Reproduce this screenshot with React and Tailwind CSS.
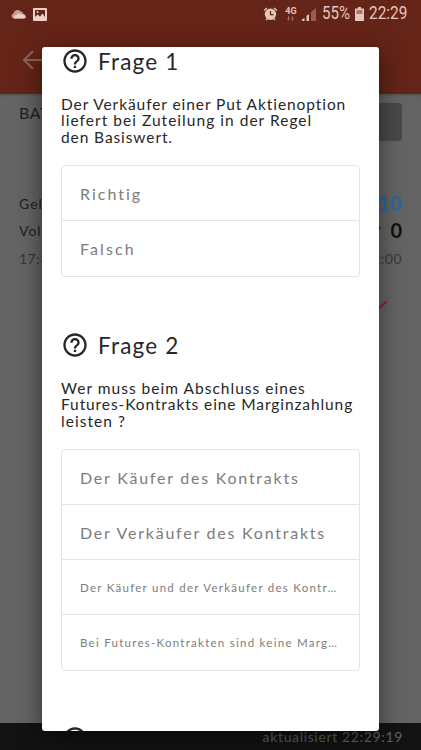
import React from 'react'

const questions = [
  {
    id: 1,
    title: 'Frage 1',
    lines: [
      { text: 'Der Verkäufer einer Put Aktienoption', tracking: 'tracking-[0.92px]' },
      { text: 'liefert bei Zuteilung in der Regel', tracking: 'tracking-[1.03px]' },
      { text: 'den Basiswert.', tracking: 'tracking-[0.9px]' },
    ],
    options: [
      { text: 'Richtig', style: 'text-base tracking-[2px]' },
      { text: 'Falsch', style: 'text-base tracking-[2.1px]' },
    ],
  },
  {
    id: 2,
    title: 'Frage 2',
    lines: [
      { text: 'Wer muss beim Abschluss eines', tracking: 'tracking-[1.02px]' },
      { text: 'Futures-Kontrakts eine Marginzahlung', tracking: 'tracking-[0.9px]' },
      { text: 'leisten ?', tracking: 'tracking-[1.05px]' },
    ],
    options: [
      { text: 'Der Käufer des Kontrakts', style: 'text-base tracking-[1.76px]' },
      { text: 'Der Verkäufer des Kontrakts', style: 'text-base tracking-[1.77px]' },
      { text: 'Der Käufer und der Verkäufer des Kontr…', style: 'text-[11.500px] tracking-[1.26px]' },
      { text: 'Bei Futures-Kontrakten sind keine Marg…', style: 'text-[11.500px] tracking-[1.26px]' },
    ],
  },
  { id: 3 },
]

const HelpIcon = () => (
  <svg viewBox="0 0 24 24" className="h-7 w-7 shrink-0 fill-[#272727]">
    <path d="M11 18h2v-2h-2v2zm1-16C6.48 2 2 6.48 2 12s4.48 10 10 10 10-4.48 10-10S17.52 2 12 2zm0 18c-4.41 0-8-3.59-8-8s3.59-8 8-8 8 3.59 8 8-3.59 8-8 8zm0-14c-2.21 0-4 1.79-4 4h2c0-1.1.9-2 2-2s2 .9 2 2c0 2-3 1.75-3 5h2c0-2.25 3-2.5 3-5 0-2.21-1.79-4-4-4z" />
  </svg>
)

const StatusBar = () => (
  <div className="flex h-7 items-center justify-between pl-[11px] pr-[13px] font-[Roboto,sans-serif] text-[#e6c5bd]">
    <div className="flex items-center gap-[7px]">
      <svg viewBox="0 0 15 10" className="h-[10px] w-[15px]">
        <path d="M3 9.5a2.7 2.7 0 0 1-.4-5.3A4.2 4.2 0 0 1 10 2.5a3 3 0 0 1 2.3 2.2 2.5 2.5 0 0 1 0 4.8z" fill="#c39c94" />
        <path d="M3 9.5c-.6-2 .8-3.700 2.700-3.600C7 4.200 9.500 4 10.700 5.500c2-.5 4.200.600 4 2.500-.1 1-1 1.500-2 1.500z" fill="#ecd0c9" />
      </svg>
      <svg viewBox="0 0 14 13" className="h-[13px] w-[14px]">
        <rect width="14" height="13" rx="1" fill="#ecd0c9" />
        <path d="M2 2h10v7L9.500 5.500 7 8.500 4.500 6.500 2 9z" fill="#642417" />
        <circle cx="4.500" cy="4" r="1" fill="#ecd0c9" />
      </svg>
    </div>
    <div className="flex items-center">
      <svg viewBox="0 0 15 14" className="h-[14px] w-[15px]">
        <circle cx="7.500" cy="7.300" r="5.700" fill="currentColor" />
        <path d="M1 3.500 4 1M11 1l3 2.500M3 13l1.500-1.500M12 13l-1.500-1.500" stroke="currentColor" strokeWidth="1.400" />
        <path d="M7.500 4v3.700h3" fill="none" stroke="#642417" strokeWidth="1.200" />
      </svg>
      <div className="ml-[7px] flex w-3 flex-col items-center">
        <span className="text-[9px] font-bold leading-[8px]">4G</span>
        <svg viewBox="0 0 8 5" className="mt-px h-[5px] w-2 fill-[#9f6a60]">
          <path d="M1 0h1v2.500h1L1.500 5 0 2.500h1zM6 5H5V2.500H4L5.500 0 7 2.500H6z" />
        </svg>
      </div>
      <svg viewBox="0 0 14 14" className="ml-[5px] h-[14px] w-[14px]">
        <path d="M9 5l5-4v13H9z" fill="#965e53" />
        <path d="M0 12.500 2.500 11v3H0zM4.500 9 7 7v7H4.500z" fill="currentColor" />
      </svg>
      <span className="ml-[6px] w-7 origin-left scale-x-[0.86] whitespace-nowrap text-[17.500px] leading-none">55%</span>
      <svg viewBox="0 0 9 14" className="ml-[5px] h-[14px] w-[9px]">
        <path d="M3 0h3v1.500h3V14H0V1.500h3z" fill="currentColor" />
        <path d="M1.500 3h6v4h-6z" fill="#a8776d" />
      </svg>
      <span className="ml-[5px] w-[39px] origin-left scale-x-[0.88] whitespace-nowrap text-[17.500px] leading-none">22:29</span>
    </div>
  </div>
)

const Background = () => (
  <div className="flex h-full flex-col">
    <div className="h-[94px] bg-[#642417]">
      <StatusBar />
      <svg viewBox="0 0 22 20" className="ml-[22px] mt-[22px] h-5 w-[22px]" fill="none" stroke="#8c635a" strokeWidth="2">
        <path d="M22 10H2M11 1l-9 9 9 9" />
      </svg>
    </div>
    <div className="flex-1 bg-[#646464] pl-[19px] pr-[19px] pt-[9px] text-[#202020] shadow-[inset_0_3px_3px_-2px_#505050]">
      <div className="flex justify-between">
        <span className="text-base leading-5 tracking-[0.5px]">BAT</span>
        <div className="h-[38px] w-24 rounded bg-[#494949]" />
      </div>
      <div className="mt-[48px] flex items-center justify-between leading-7">
        <span className="pt-px text-sm tracking-[1px]">Geld</span>
        <span className="text-[20px] font-bold tracking-[0.5px] text-[#276a9c]">10</span>
      </div>
      <div className="flex h-[27px] items-center justify-between leading-[27px]">
        <span className="pt-px text-sm tracking-[1px]">Vol.</span>
        <span className="flex items-center gap-[9px] text-[20px] font-bold text-[#101010]">
          <span className="text-xs">*</span>0
        </span>
      </div>
      <div className="mt-px flex items-center justify-between text-sm leading-7 tracking-[0.5px] text-[#383838]">
        <span>17:30</span>
        <span>22:00</span>
      </div>
      <svg viewBox="0 0 16 9" className="ml-auto mr-[15px] mt-[28px] h-[9px] w-4" fill="none" stroke="#8c2525" strokeWidth="2">
        <path d="M0 1l7 7 8.500-7.500" />
      </svg>
    </div>
    <div className="flex h-[27px] items-center justify-end bg-[#131313] pr-[18px] text-sm tracking-[0.65px] text-[#636363]">
      aktualisiert 22:29:19
    </div>
  </div>
)

const Question = ({ title, lines, options }) => (
  <section className="flex flex-col">
    <div className="flex h-7 items-center gap-[9px]">
      <HelpIcon />
      {title && <h2 className="pt-0.5 text-[22.500px] leading-7 tracking-[1.2px] text-[#272727]">{title}</h2>}
    </div>
    {lines && (
      <p className="mt-[21px] h-[49px] text-[15.500px] leading-[16.400px] text-[#272727]">
        {lines.map((line) => (
          <span key={line.text} className={`block whitespace-nowrap ${line.tracking}`}>{line.text}</span>
        ))}
      </p>
    )}
    {options && (
      <div className="mb-[54px] mt-5 divide-y divide-[#e4e4e4] rounded border border-[#e4e4e4]">
        {options.map((option) => (
          <div key={option.text} className="flex h-[55px] items-center pl-[18px] pt-px text-[#7c7c7c]">
            <span className={`whitespace-nowrap ${option.style}`}>{option.text}</span>
          </div>
        ))}
      </div>
    )}
  </section>
)

const App = () => {
  return (
    <div className="relative h-[750px] w-[421px] overflow-hidden font-[Lato,sans-serif]">
      <Background />

      {/* DIALOG */}
      <div className="absolute left-[42px] top-[47px] h-[684px] w-[337px] overflow-hidden rounded-[3px] bg-white px-[19px] shadow-[0_8px_24px_rgba(0,0,0,0.5)]">
        {questions.map((q) => (
          <Question key={q.id} {...q} />
        ))}
      </div>
    </div>
  )
}

export default App
